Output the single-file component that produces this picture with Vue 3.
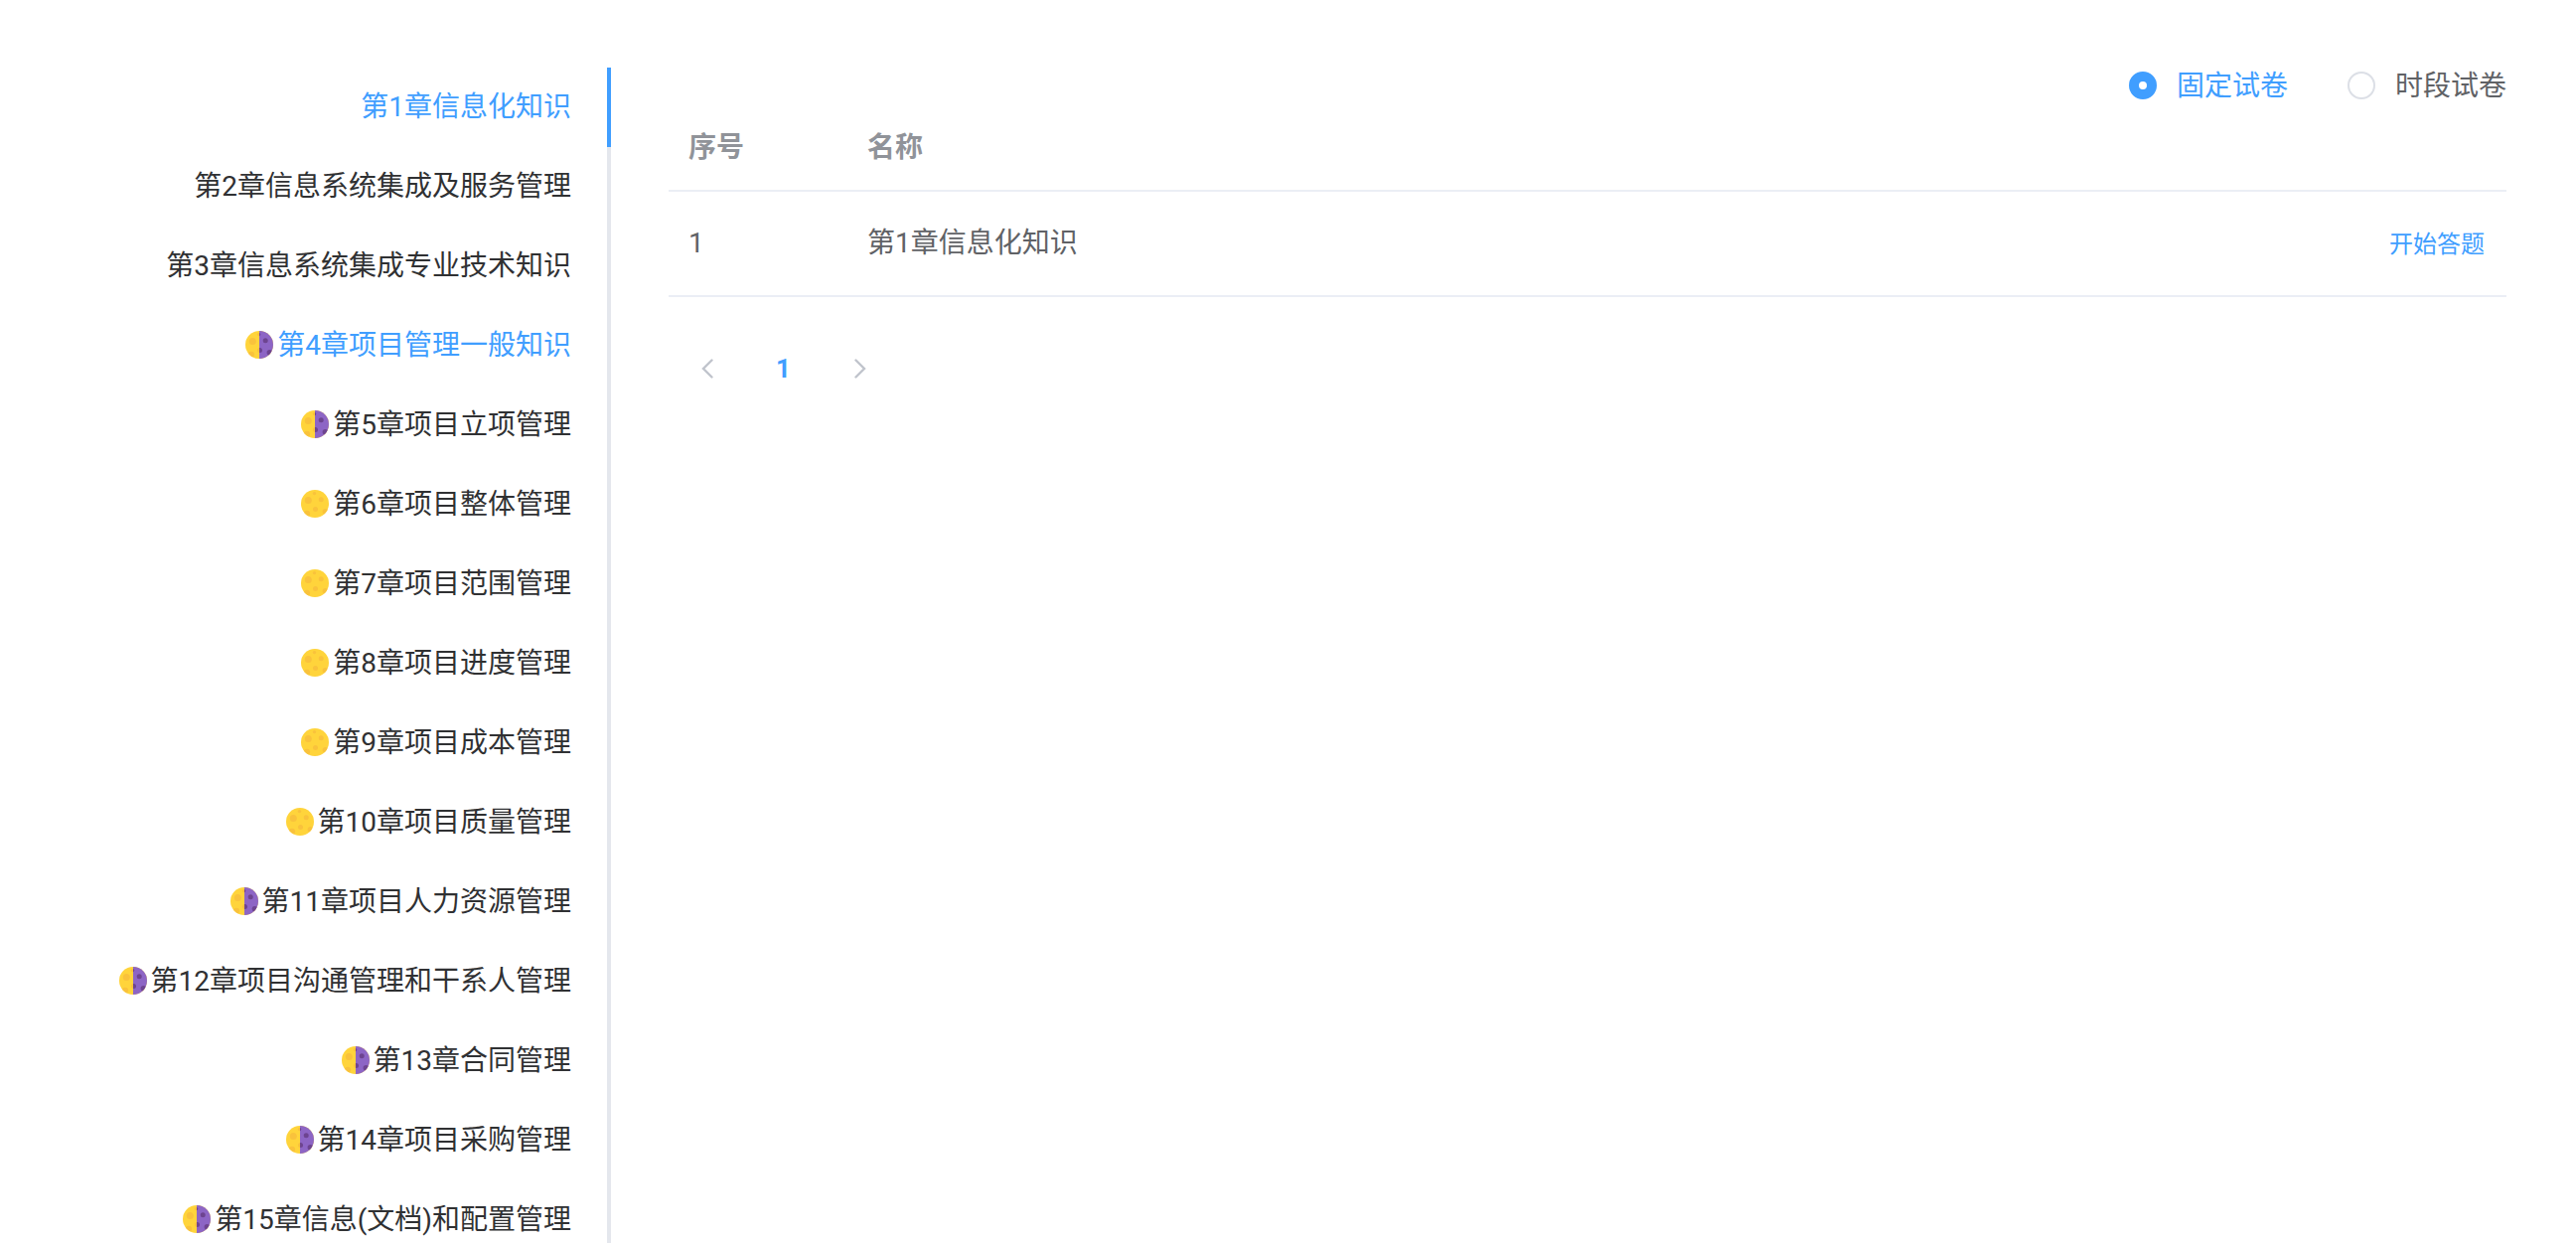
<script setup>
import { ref } from 'vue'

const chapters = [
  { name: '第1章信息化知识' },
  { name: '第2章信息系统集成及服务管理' },
  { name: '第3章信息系统集成专业技术知识' },
  { name: '第4章项目管理一般知识', moon: 'half', hover: true },
  { name: '第5章项目立项管理', moon: 'half' },
  { name: '第6章项目整体管理', moon: 'full' },
  { name: '第7章项目范围管理', moon: 'full' },
  { name: '第8章项目进度管理', moon: 'full' },
  { name: '第9章项目成本管理', moon: 'full' },
  { name: '第10章项目质量管理', moon: 'full' },
  { name: '第11章项目人力资源管理', moon: 'half' },
  { name: '第12章项目沟通管理和干系人管理', moon: 'half' },
  { name: '第13章合同管理', moon: 'half' },
  { name: '第14章项目采购管理', moon: 'half' },
  { name: '第15章信息(文档)和配置管理', moon: 'half' },
]

const craters = [
  { x: 7.3, y: 10.5, r: 3.5 },
  { x: 13.5, y: 3.6, r: 1.7 },
  { x: 20.2, y: 9.8, r: 2.5 },
  { x: 14.5, y: 19.4, r: 2.5 },
  { x: 6, y: 23.8, r: 3.1 },
  { x: 24.4, y: 21.8, r: 2.8 },
]

const papers = [{ id: 1, name: '第1章信息化知识' }]
const active = ref(0)
const kind = ref('fixed')
</script>

<template>
  <div class="page">
    <nav class="tabs" aria-label="章节">
      <button
        v-for="(c, i) in chapters"
        :key="c.name"
        type="button"
        class="tab"
        :class="{ active: i === active, hover: c.hover }"
        @click="active = i"
      >
        <svg v-if="c.moon" class="moon" viewBox="0 0 28 28" aria-hidden="true">
          <rect width="28" height="28" fill="#ffd43b" />
          <circle v-for="(k, n) in craters" :key="n" :cx="k.x" :cy="k.y" :r="k.r" fill="#f9c23c" />
          <svg v-if="c.moon === 'half'" x="14" width="14" height="28" viewBox="14 0 14 28">
            <rect x="14" width="14" height="28" fill="#8d65c5" />
            <circle v-for="(k, n) in craters" :key="n" :cx="k.x" :cy="k.y" :r="k.r" fill="#6d4490" />
          </svg>
        </svg>
        <span>{{ c.name }}</span>
      </button>
    </nav>

    <main class="content">
      <div class="kinds" role="radiogroup" aria-label="试卷类型">
        <label class="kind">
          <input v-model="kind" type="radio" name="kind" value="fixed" />
          <span>固定试卷</span>
        </label>
        <label class="kind">
          <input v-model="kind" type="radio" name="kind" value="timed" />
          <span>时段试卷</span>
        </label>
      </div>

      <table class="papers">
        <thead>
          <tr>
            <th class="index">序号</th>
            <th>名称</th>
            <th class="action"></th>
          </tr>
        </thead>
        <tbody>
          <tr v-for="p in papers" :key="p.id">
            <td>{{ p.id }}</td>
            <td>{{ p.name }}</td>
            <td class="action"><a href="#">开始答题</a></td>
          </tr>
        </tbody>
      </table>

      <div class="pager">
        <button type="button" disabled aria-label="上一页">
          <svg viewBox="0 0 12 20"><path d="M10.5 1.5 2 10l8.5 8.5" /></svg>
        </button>
        <button type="button" class="current">1</button>
        <button type="button" disabled aria-label="下一页">
          <svg viewBox="0 0 12 20"><path d="M1.5 1.5 10 10l-8.5 8.5" /></svg>
        </button>
      </div>
    </main>
  </div>
</template>

<style>
body {
  margin: 0;
  background: #fff;
}
</style>

<style scoped>
.page {
  box-sizing: border-box;
  display: flex;
  gap: 58px;
  height: 100vh;
  overflow: hidden;
  padding: 68px 70px 0;
  font-family: Roboto, 'Noto Sans CJK SC', sans-serif;
  font-size: 28px;
  color: #606266;
}

button {
  border: 0;
  background: none;
  font-family: inherit;
  cursor: pointer;
}

.tabs {
  display: flex;
  flex-direction: column;
  flex: none;
  width: 545px;
}

.tab {
  display: flex;
  flex: none;
  align-items: center;
  justify-content: flex-end;
  gap: 4px;
  height: 80px;
  padding: 0 36px 0 0;
  border-right: 4px solid #e4e7ed;
  font-size: 28px;
  line-height: 40px;
  white-space: nowrap;
  color: #303133;
}

.tab.active,
.tab.hover,
.tab:hover {
  color: #409eff;
}

.tab.active {
  border-right-color: #409eff;
}

.moon {
  width: 28px;
  height: 28px;
  margin-bottom: 2px;
  border-radius: 50%;
  overflow: hidden;
}

.content {
  flex: 1;
  min-width: 0;
}

.kinds {
  display: flex;
  justify-content: flex-end;
  gap: 60px;
  height: 36px;
}

.kind {
  display: flex;
  align-items: center;
  gap: 20px;
  line-height: 36px;
  cursor: pointer;
}

.kind span {
  padding-top: 2px;
}

.kind input {
  appearance: none;
  box-sizing: border-box;
  width: 28px;
  height: 28px;
  margin: 0;
  border: 2px solid #dcdfe6;
  border-radius: 50%;
  background: #fff;
}

.kind input:checked {
  border: 10px solid #409eff;
}

.kind input:checked + span {
  color: #409eff;
}

.papers {
  width: 100%;
  border-collapse: separate;
  border-spacing: 0;
  table-layout: fixed;
}

th,
td {
  box-sizing: border-box;
  height: 106px;
  padding: 0 20px;
  border-bottom: 2px solid #ebeef5;
  text-align: left;
  line-height: 46px;
}

th {
  height: 89px;
  padding-top: 2px;
  color: #909399;
}

.index {
  width: 180px;
}

.action {
  width: 240px;
  padding-right: 22px;
  text-align: right;
}

.action a {
  font-size: 24px;
  color: #409eff;
  text-decoration: none;
}

.pager {
  display: flex;
  margin-top: 44px;
}

.pager button {
  display: flex;
  align-items: center;
  justify-content: center;
  width: 77px;
  height: 56px;
  padding: 0;
  font-size: 26px;
  font-weight: 700;
}

.pager .current {
  color: #409eff;
}

.pager svg {
  width: 12px;
  height: 20px;
  fill: none;
  stroke: #c0c4cc;
  stroke-width: 2.4;
  stroke-linecap: round;
}
</style>
